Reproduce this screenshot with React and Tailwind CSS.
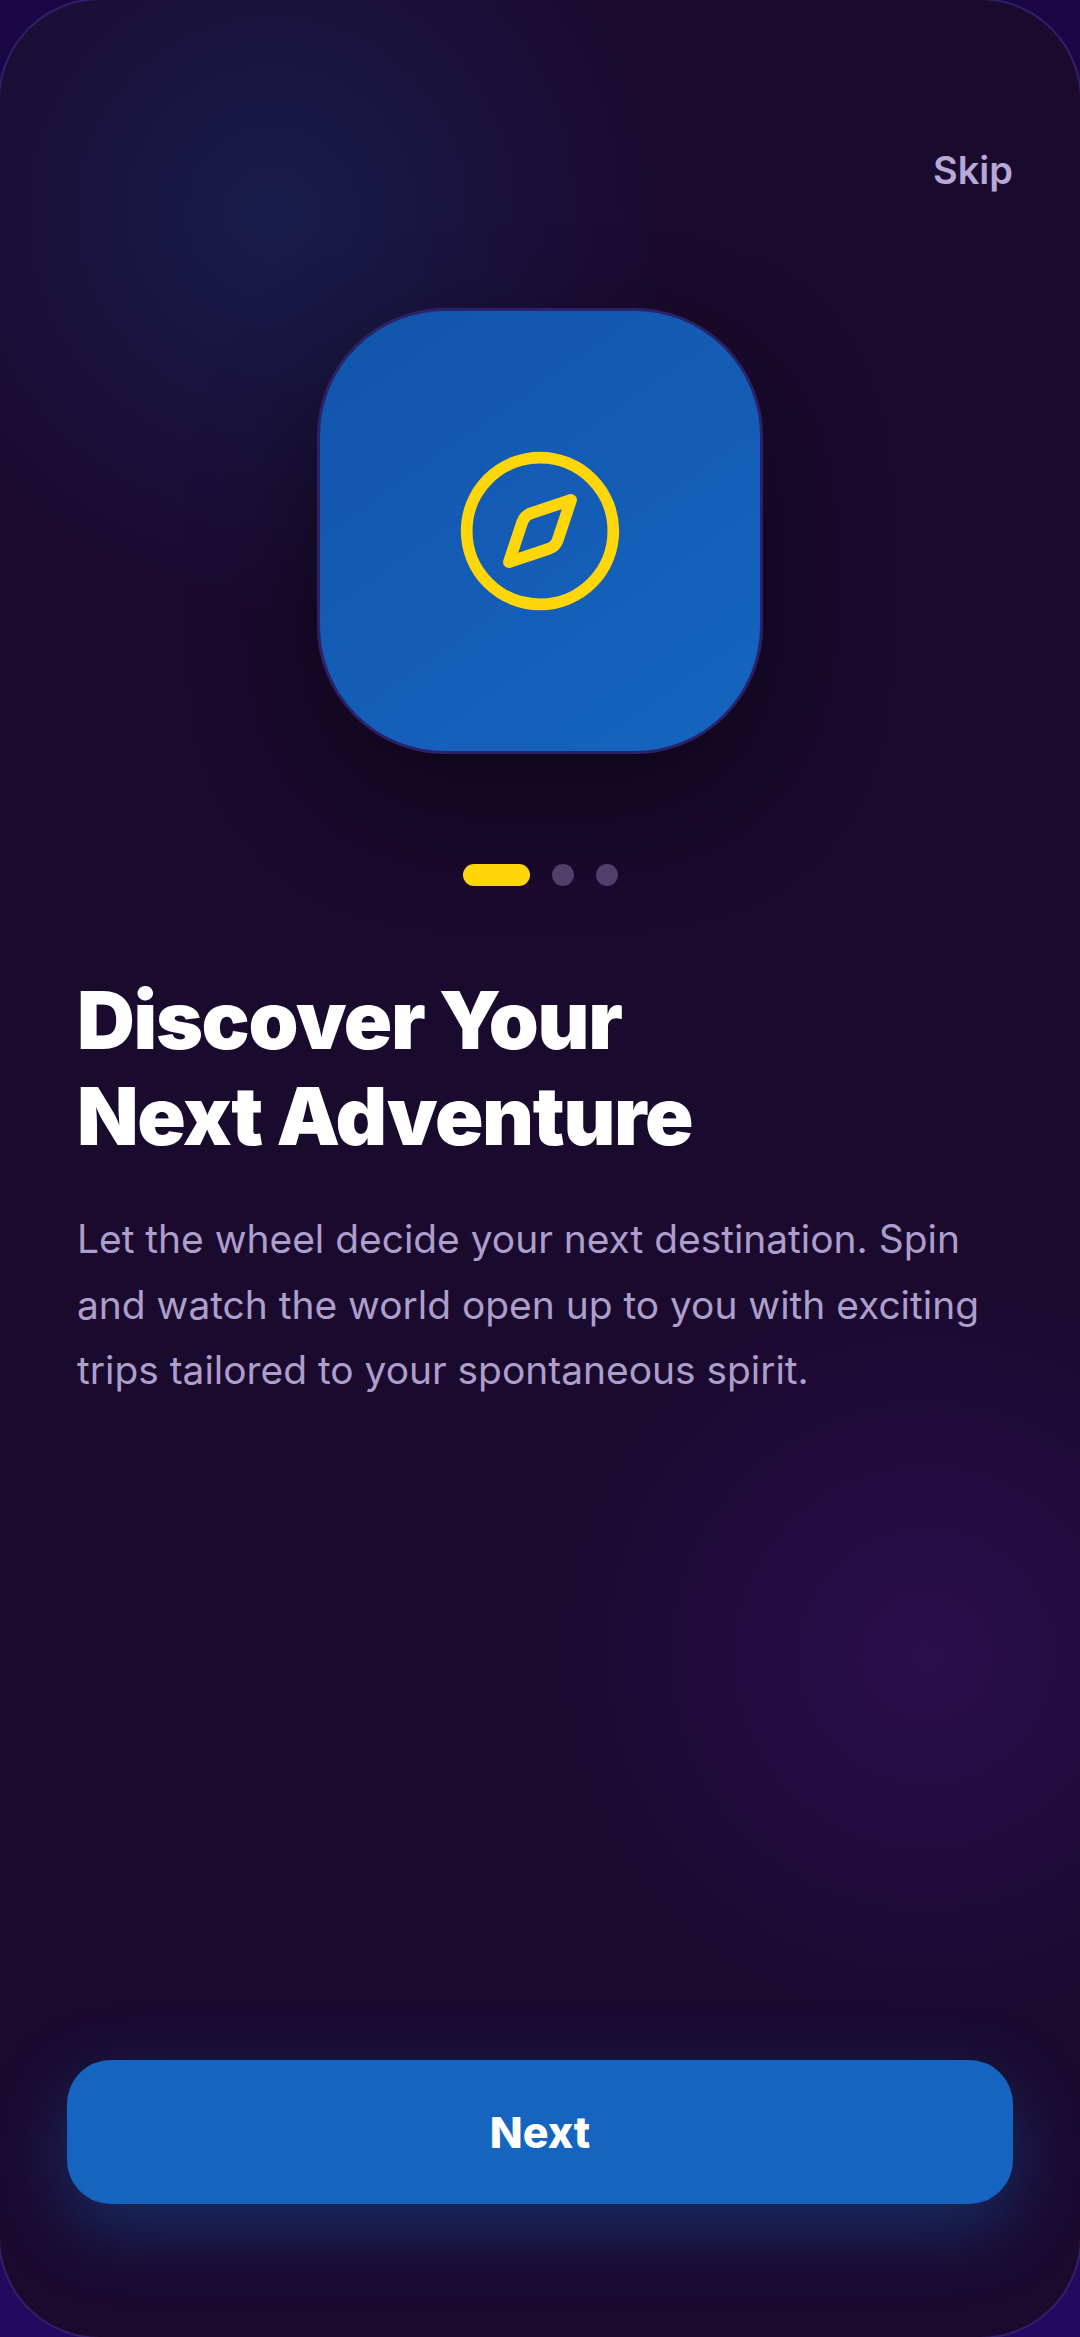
const App = () => {
  return (
    <div className="w-[1080px] h-[2337px] bg-[linear-gradient(180deg,#1a0545,#23095f)] overflow-hidden font-['Inter',sans-serif]">
      {/* frame runs 2px past the page, only the rounded corners show the border */}
      <div className="relative w-[1084px] h-[2341px] -ml-[2px] -mt-[2px] rounded-[102px] border-2 border-[#33206b] bg-[#1a0a2e] overflow-hidden flex flex-col px-[67px] pb-[133px] pt-[146px]">
        {/* background glows */}
        <div className="absolute left-[-128px] top-[-188px] w-[800px] h-[800px] rounded-full bg-[radial-gradient(circle,rgba(21,101,192,0.2)_0%,rgba(21,101,192,0)_70%)]" />
        <div className="absolute left-[546px] top-[1276px] w-[760px] h-[760px] rounded-full bg-[radial-gradient(circle,rgba(74,20,140,0.34)_0%,rgba(74,20,140,0)_70%)]" />

        <div className="relative flex justify-end">
          <span className="text-[38px] leading-[48px] font-semibold text-[#b8a8d8]">Skip</span>
        </div>

        <div className="relative flex justify-center mt-[114px]">
          <div className="w-[446px] h-[446px] rounded-[128px] border-[3px] border-[#2c2268] bg-[linear-gradient(145deg,#1254ac,#1565c0)] shadow-[0_48px_120px_rgba(0,0,0,0.45)] flex items-center justify-center">
            <svg width="176" height="176" viewBox="0 0 24 24" fill="none" stroke="#ffd60a" strokeWidth="1.6" strokeLinecap="round" strokeLinejoin="round">
              <circle cx="12" cy="12" r="10" />
              <path d="m16.24 7.76-1.804 5.411a2 2 0 0 1-1.265 1.265L7.76 16.24l1.804-5.411a2 2 0 0 1 1.265-1.265z" />
            </svg>
          </div>
        </div>

        <div className="relative flex justify-center items-center gap-[22px] mt-[110px]">
          <div className="w-[67px] h-[22px] rounded-full bg-[#ffd60a]" />
          <div className="w-[22px] h-[22px] rounded-full bg-[#503f6b]" />
          <div className="w-[22px] h-[22px] rounded-full bg-[#503f6b]" />
        </div>

        <h1 className="relative mt-[86px] ml-[10px] text-[80px] leading-[96px] font-black tracking-[-1.3px] text-white">
          Discover Your
          <br />
          Next Adventure
        </h1>
        <p className="relative mt-[42px] ml-[10px] text-[38.9px] leading-[65.5px] text-[#ae9ecb]">
          Let the wheel decide your next destination. Spin
          <br />
          and watch the world open up to you with exciting
          <br />
          trips tailored to your spontaneous spirit.
        </p>

        <div className="mt-auto relative">
          <button className="w-full h-[144px] rounded-[44px] bg-[#1565c0] shadow-[0_24px_72px_rgba(21,101,192,0.4)] text-[43px] font-extrabold text-white">
            Next
          </button>
        </div>
      </div>
    </div>
  )
}

export default App
